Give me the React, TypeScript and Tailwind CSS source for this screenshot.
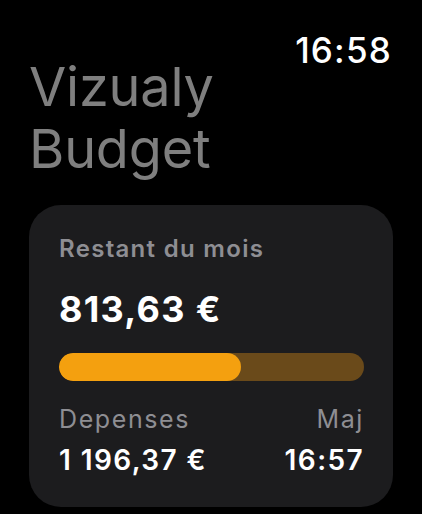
import React from 'react';

const font = { fontFamily: 'Inter, "Noto Sans", sans-serif' };

const App: React.FC = () => {
  const spent = 1196.37;
  const left = 813.63;
  const ratio = (spent / (spent + left)) * 100;

  return (
    <div className="w-[422px] h-[514px] bg-black overflow-hidden text-white" style={font}>
      <div className="flex justify-end pt-[41px] pr-[30px]">
        <span className="text-[35px] leading-[18px] font-medium tracking-[1.2px]">16:58</span>
      </div>
      <h1 className="pl-[29px] text-[54px] leading-[56px] text-[#7f7f7f] font-normal tracking-[-0.2px]">
        <span className="block">Vizualy</span>
        <span className="block mt-[6px]">Budget</span>
      </h1>
      <div className="mt-[28px] mx-[29px] rounded-[32px] bg-[#1c1c1e] pt-[29px] pb-[31px] pl-[30px] pr-[29px]">
        <div className="text-[24px] leading-[30px] font-semibold text-[#8e8e93] tracking-[1.3px]">
          Restant du mois
        </div>
        <div className="mt-[25px] text-[36px] leading-[41px] font-bold tracking-[1.3px]">813,63 €</div>
        <div className="mt-[23px] h-[28px] w-full rounded-full bg-[#6a4a1a] overflow-hidden">
          <div className="h-full rounded-full bg-[#f4a00f]" style={{ width: `${ratio}%` }} />
        </div>
        <div className="mt-[23px] flex justify-between text-[25px] leading-[30px] text-[#8e8e93] tracking-[1.6px]">
          <span>Depenses</span>
          <span>Maj</span>
        </div>
        <div className="mt-[10px] flex justify-between text-[28px] leading-[32px] font-semibold tracking-[1.4px]">
          <span>1 196,37 €</span>
          <span>16:57</span>
        </div>
      </div>
    </div>
  );
};

export default App;
